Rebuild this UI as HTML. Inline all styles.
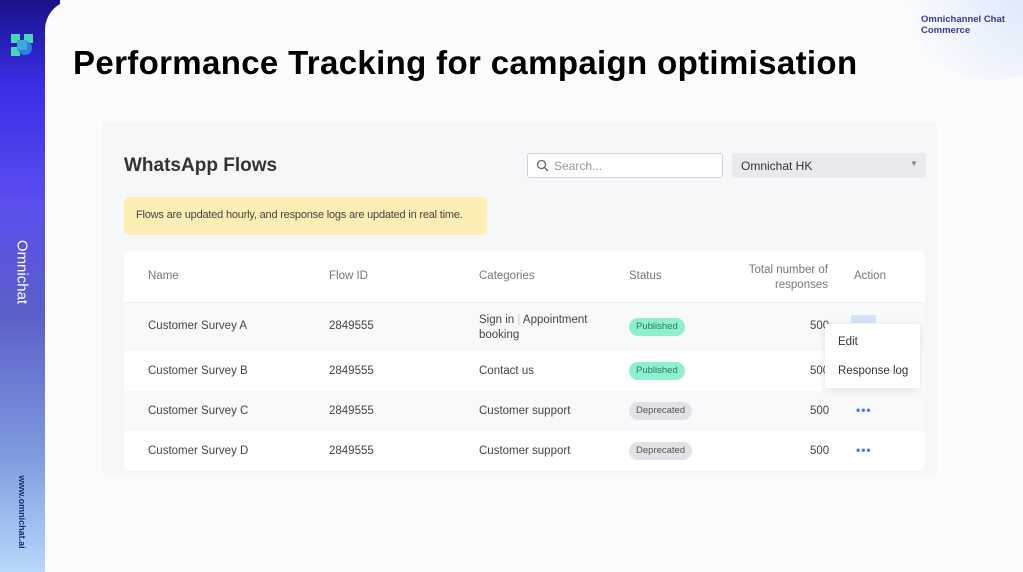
<!DOCTYPE html>
<html><head><style>
*{margin:0;padding:0;box-sizing:border-box}
body{width:1023px;height:572px;overflow:hidden;position:relative;background:#fff;font-family:"Liberation Sans",sans-serif}
.side{position:absolute;left:0;top:0;width:60px;height:572px;background:linear-gradient(180deg,#17128a 0%,#3a2ee8 15%,#5a4ef0 35%,#5b5fc8 55%,#7f9ce0 80%,#b7d8fb 100%)}
.main{position:absolute;left:45px;top:0;right:0;bottom:0;background:#fcfcfd;border-top-left-radius:30px}
.circle{position:absolute;left:893px;top:-100px;width:200px;height:180px;border-radius:50%;background:radial-gradient(circle at 70% 50%,#dbe9fb,#f3f7fd 60%,#fcfcfd 80%)}
.abs{position:absolute}
.t{font-family:"Liberation Sans",sans-serif;font-size:13px;color:#444}
.badge{position:absolute;height:18px;border-radius:9px;font-size:9.5px;padding:0 7px;line-height:18px}
.pub{background:#8ef0cc;color:#2a7a5a}
.dep{background:#e1e2e6;color:#555}
.dots{position:absolute;color:#4a7ae8;font-size:12px;font-weight:bold;letter-spacing:1px}
</style></head><body>
<div class="side"></div>
<div class="main"></div>
<div class="circle"></div>
<svg class="abs" style="left:11px;top:34px" width="22" height="22" viewBox="0 0 22 22"><rect x="0" y="0" width="9" height="9" fill="#47d6b8"/><rect x="13" y="0" width="9" height="9" fill="#47d6b8"/><rect x="0" y="13" width="9" height="9" fill="#47d6b8"/><circle cx="14" cy="14" r="7" fill="#2f7fe0"/><rect x="6" y="6" width="10" height="10" fill="#3fa7d8"/></svg>
<div class="abs" style="left:22px;top:272px;transform:translate(-50%,-50%) rotate(90deg);color:#fff;font-size:15px;white-space:nowrap">Omnichat</div>
<div class="abs" style="left:22px;top:512px;transform:translate(-50%,-50%) rotate(90deg);color:#1a2a6a;font-size:9px;font-weight:bold;white-space:nowrap">www.omnichat.ai</div>
<div class="abs" style="left:921px;top:14px;font-size:9.5px;color:#3a3a9a;line-height:11px;font-weight:bold">Omnichannel Chat<br>Commerce</div>
<div class="abs" style="left:73px;top:44px;font-size:33px;font-weight:bold;color:#000;letter-spacing:0.35px">Performance Tracking for campaign optimisation</div>
<div class="abs" style="left:102px;top:122px;width:835px;height:353px;background:#f6f7f9"></div>
<div class="abs" style="left:124px;top:155px;font-size:19px;font-weight:bold;color:#333">WhatsApp Flows</div>
<div class="abs" style="left:527px;top:153px;width:196px;height:25px;border:1px solid #cfd2d8;border-radius:3px;background:#fff"></div>
<svg class="abs" style="left:536px;top:159px" width="13" height="13" viewBox="0 0 13 13"><circle cx="5.5" cy="5.5" r="4" fill="none" stroke="#666" stroke-width="1.3"/><path d="M8.5 8.5L12 12" stroke="#666" stroke-width="1.3"/></svg>
<div class="abs t" style="left:554px;top:159px;font-size:12px;color:#999">Search...</div>
<div class="abs" style="left:732px;top:153px;width:194px;height:25px;background:#e9eaee;border-radius:3px"></div>
<div class="abs t" style="left:741px;top:159px;font-size:12px;color:#333">Omnichat HK</div>
<div class="abs" style="left:910px;top:159px;font-size:8px;color:#888">▼</div>
<div class="abs" style="left:124px;top:197px;width:363px;height:38px;background:#fdeeb4;border-radius:5px"></div>
<div class="abs t" style="left:136px;top:209px;font-size:11px;color:#444;letter-spacing:-0.2px">Flows are updated hourly, and response logs are updated in real time.</div>
<div class="abs" style="left:124px;top:251px;width:801px;height:219px;background:#fff;border-radius:4px"></div>
<div class="abs" style="left:124px;top:302px;width:801px;height:1px;background:#eceef1"></div>
<div class="abs" style="left:124px;top:303px;width:801px;height:48px;background:#f8f9fb"></div>
<div class="abs" style="left:124px;top:391px;width:801px;height:40px;background:#f8f9fb"></div>
<div class="abs t" style="left:148px;top:270px;font-size:11.5px;color:#777">Name</div>
<div class="abs t" style="left:329px;top:270px;font-size:11.5px;color:#777">Flow ID</div>
<div class="abs t" style="left:479px;top:270px;font-size:11.5px;color:#777">Categories</div>
<div class="abs t" style="left:629px;top:270px;font-size:11.5px;color:#777">Status</div>
<div class="abs t" style="left:728px;top:263px;width:100px;text-align:right;font-size:11.5px;color:#777;line-height:15px">Total number of<br>responses</div>
<div class="abs t" style="left:854px;top:270px;font-size:11.5px;color:#777">Action</div>

<div class="abs t" style="left:148px;top:320px;font-size:11.5px">Customer Survey A</div>
<div class="abs t" style="left:329px;top:320px;font-size:11.5px">2849555</div>
<div class="abs t" style="left:479px;top:313px;font-size:11.5px;line-height:15px">Sign in <span style="color:#ccc">|</span> Appointment<br>booking</div>
<div class="badge pub" style="left:629px;top:318px">Published</div>
<div class="abs t" style="left:810px;top:320px;font-size:11.5px">500</div>
<div class="abs" style="left:851px;top:315px;width:25px;height:8px;background:#d3e2fb;border-radius:2px"></div>

<div class="abs t" style="left:148px;top:365px;font-size:11.5px">Customer Survey B</div>
<div class="abs t" style="left:329px;top:365px;font-size:11.5px">2849555</div>
<div class="abs t" style="left:479px;top:365px;font-size:11.5px">Contact us</div>
<div class="badge pub" style="left:629px;top:362px">Published</div>
<div class="abs t" style="left:810px;top:365px;font-size:11.5px">500</div>

<div class="abs t" style="left:148px;top:405px;font-size:11.5px">Customer Survey C</div>
<div class="abs t" style="left:329px;top:405px;font-size:11.5px">2849555</div>
<div class="abs t" style="left:479px;top:405px;font-size:11.5px">Customer support</div>
<div class="badge dep" style="left:629px;top:402px">Deprecated</div>
<div class="abs t" style="left:810px;top:405px;font-size:11.5px">500</div>
<div class="dots" style="left:856px;top:403px">•••</div>

<div class="abs t" style="left:148px;top:445px;font-size:11.5px">Customer Survey D</div>
<div class="abs t" style="left:329px;top:445px;font-size:11.5px">2849555</div>
<div class="abs t" style="left:479px;top:445px;font-size:11.5px">Customer support</div>
<div class="badge dep" style="left:629px;top:442px">Deprecated</div>
<div class="abs t" style="left:810px;top:445px;font-size:11.5px">500</div>
<div class="dots" style="left:856px;top:443px">•••</div>

<div class="abs" style="left:825px;top:324px;width:95px;height:64px;background:#fff;border-radius:3px;box-shadow:0 2px 8px rgba(0,0,0,0.12)"></div>
<div class="abs t" style="left:838px;top:336px;font-size:11.5px;color:#333">Edit</div>
<div class="abs t" style="left:838px;top:365px;font-size:11.5px;color:#333">Response log</div>
</body></html>
